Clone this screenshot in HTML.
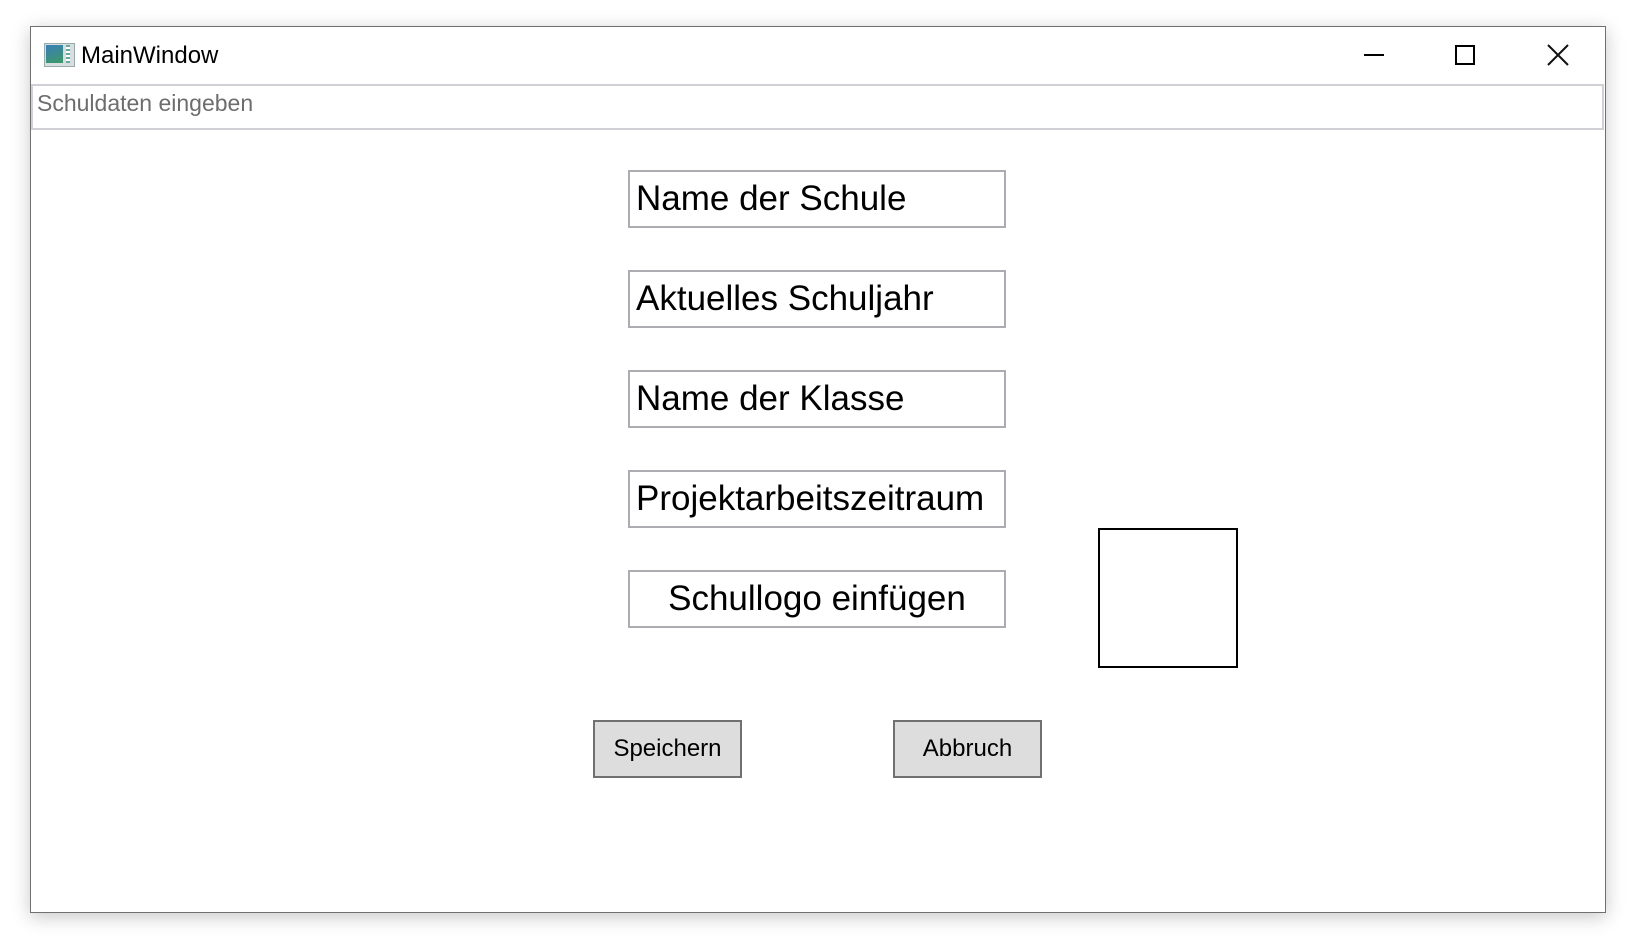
<!DOCTYPE html>
<html><head><meta charset="utf-8"><style>
body{margin:0;width:1639px;height:952px;background:#fff;position:relative;overflow:hidden;font-family:"Liberation Sans","DejaVu Sans",sans-serif}
.win{position:absolute;left:30px;top:26px;width:1574px;height:885px;border:1px solid #707070;background:#fff;box-shadow:0 4px 18px rgba(0,0,0,.22)}
.a{position:absolute}
.tb{position:absolute;left:628px;width:368px;height:54px;border:2px solid #abadb3;background:#fff;font-size:35px;line-height:54px;padding-left:6px;box-sizing:content-box;color:#000;white-space:nowrap}
.btn{position:absolute;top:720px;width:145px;height:54px;border:2px solid #707070;background:#dddddd;font-size:24px;line-height:54px;text-align:center;color:#000}
</style></head><body>
<div class="win"></div>
<div class="a" style="left:44px;top:43px;width:29px;height:22px;background:#d8dde2;border:1px solid #9aa;"></div>
<div class="a" style="left:46px;top:45px;width:17px;height:18px;background:linear-gradient(160deg,#3a7db8,#3d9a66)"></div>
<div class="a" style="left:66px;top:45px;width:4px;height:18px;background:repeating-linear-gradient(#6a9 0 2px,#fff 2px 4px)"></div>
<div class="a" style="left:81px;top:42px;font-size:24px;color:#000">MainWindow</div>
<div class="a" style="left:1364px;top:54px;width:20px;height:2px;background:#000"></div>
<div class="a" style="left:1455px;top:45px;width:16px;height:16px;border:2px solid #000"></div>
<svg class="a" style="left:1546px;top:43px" width="24" height="24"><path d="M2 2L22 22M22 2L2 22" stroke="#111" stroke-width="2"/></svg>
<div class="a" style="left:31px;top:84px;width:1569px;height:42px;border:2px solid #d0d0d6"></div>
<div class="a" style="left:37px;top:90px;font-size:23px;color:#6d6d6d">Schuldaten eingeben</div>
<div class="tb" style="top:170px">Name der Schule</div>
<div class="tb" style="top:270px">Aktuelles Schuljahr</div>
<div class="tb" style="top:370px">Name der Klasse</div>
<div class="tb" style="top:470px">Projektarbeitszeitraum</div>
<div class="tb" style="top:570px;padding-left:0;width:374px;text-align:center">Schullogo einfügen</div>
<div class="a" style="left:1098px;top:528px;width:136px;height:136px;border:2px solid #000"></div>
<div class="btn" style="left:593px">Speichern</div>
<div class="btn" style="left:893px">Abbruch</div>
</body></html>
